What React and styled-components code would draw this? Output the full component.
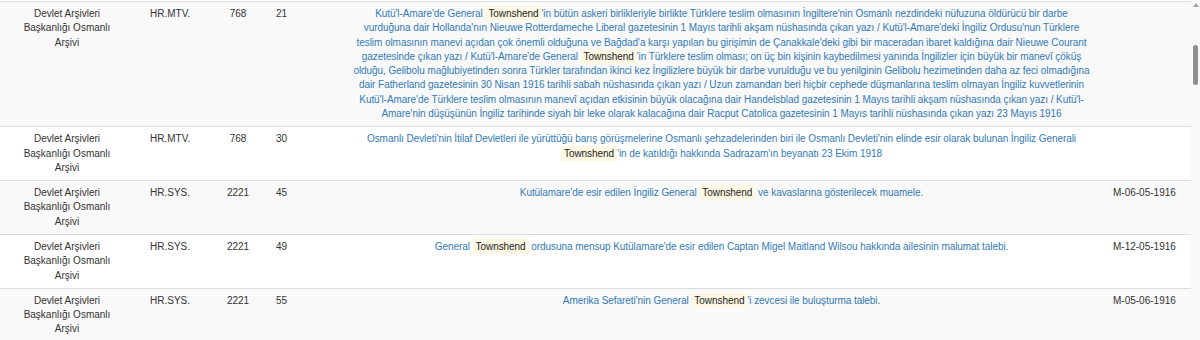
import styled, { createGlobalStyle } from "styled-components";

const GlobalStyle = createGlobalStyle`
    html, body {
        margin: 0;
        padding: 0;
        background: #fff;
    }
    body {
        font-family: "Liberation Sans", Arial, sans-serif;
        font-size: 10px;
        line-height: 1.42857;
        color: #333;
    }
`;

const Page = styled.div`
    display: flex;
    height: 340px;
    overflow: hidden;
`;

const TableArea = styled.div`
    flex: 1;
    padding-top: 1px;
`;

const Table = styled.table`
    width: 1191px;
    border-collapse: collapse;
    border-spacing: 0;
    table-layout: fixed;
`;

const Row = styled.tr`
    background: ${(p) => (p.$striped ? "#f9f9f9" : "#fff")};
`;

const Cell = styled.td`
    border-top: 1px solid #ddd;
    vertical-align: top;
    padding: ${(p) => p.$pad || "5px"};
    text-align: ${(p) => p.$align || "left"};
`;

const DescLink = styled.a`
    color: #337ab7;
    text-decoration: none;
    letter-spacing: -0.06px;
`;

/** une ligne du résumé, coupée comme dans l'original */
const DescLine = styled.span`
    display: block;
    white-space: nowrap;
`;

const Mark = styled.mark`
    background: #fcf8e3;
    color: #222;
    padding: 2px 3px;
`;

/** barre de défilement de la fenêtre */
const Scrollbar = styled.div`
    width: 9px;
    background: #f8f8f8;
    display: flex;
    flex-direction: column;
    align-items: center;
`;

const ScrollArrow = styled.div`
    margin-top: 3px;
    width: 0;
    height: 0;
    border-left: 3px solid transparent;
    border-right: 3px solid transparent;
    border-bottom: 4px solid #a3a3a3;
`;

const ScrollThumb = styled.div`
    margin-top: 38px;
    width: 5px;
    height: 40px;
    border-radius: 3px;
    background: #8f8f8f;
`;

const rows = [
    {
        fond: "HR.MTV.",
        dosya: "768",
        gomlek: "21",
        desc: [
            "Kutü'l-Amare'de General Townshend'in bütün askeri birlikleriyle birlikte Türklere teslim olmasının İngiltere'nin Osmanlı nezdindeki nüfuzuna öldürücü bir darbe",
            "vurduğuna dair Hollanda'nın Nieuwe Rotterdameche Liberal gazetesinin 1 Mayıs tarihli akşam nüshasında çıkan yazı / Kutü'l-Amare'deki İngiliz Ordusu'nun Türklere",
            "teslim olmasının manevi açıdan çok önemli olduğuna ve Bağdad'a karşı yapılan bu girişimin de Çanakkale'deki gibi bir maceradan ibaret kaldığına dair Nieuwe Courant",
            "gazetesinde çıkan yazı / Kutü'l-Amare'de General Townshend'in Türklere teslim olması; on üç bin kişinin kaybedilmesi yanında İngilizler için büyük bir manevî çöküş",
            "olduğu, Gelibolu mağlubiyetinden sonra Türkler tarafından ikinci kez İngilizlere büyük bir darbe vurulduğu ve bu yenilginin Gelibolu hezimetinden daha az feci olmadığına",
            "dair Fatherland gazetesinin 30 Nisan 1916 tarihli sabah nüshasında çıkan yazı / Uzun zamandan beri hiçbir cephede düşmanlarına teslim olmayan İngiliz kuvvetlerinin",
            "Kutü'l-Amare'de Türklere teslim olmasının manevî açıdan etkisinin büyük olacağına dair Handelsblad gazetesinin 1 Mayıs tarihli akşam nüshasında çıkan yazı / Kutü'l-",
            "Amare'nin düşüşünün İngiliz tarihinde siyah bir leke olarak kalacağına dair Racput Catolica gazetesinin 1 Mayıs tarihli nüshasında çıkan yazı 23 Mayıs 1916",
        ],
        tarih: "",
    },
    {
        fond: "HR.MTV.",
        dosya: "768",
        gomlek: "30",
        desc: [
            "Osmanlı Devleti'nin İtilaf Devletleri ile yürüttüğü barış görüşmelerine Osmanlı şehzadelerinden biri ile Osmanlı Devleti'nin elinde esir olarak bulunan İngiliz Generali",
            "Townshend'in de katıldığı hakkında Sadrazam'ın beyanatı 23 Ekim 1918",
        ],
        tarih: "",
    },
    {
        fond: "HR.SYS.",
        dosya: "2221",
        gomlek: "45",
        desc: [
            "Kutülamare'de esir edilen İngiliz General Townshend ve kavaslarına gösterilecek muamele.",
        ],
        tarih: "M-06-05-1916",
    },
    {
        fond: "HR.SYS.",
        dosya: "2221",
        gomlek: "49",
        desc: [
            "General Townshend ordusuna mensup Kutülamare'de esir edilen Captan Migel Maitland Wilsou hakkında ailesinin malumat talebi.",
        ],
        tarih: "M-12-05-1916",
    },
    {
        fond: "HR.SYS.",
        dosya: "2221",
        gomlek: "55",
        desc: [
            "Amerika Sefareti'nin General Townshend'i zevcesi ile buluşturma talebi.",
        ],
        tarih: "M-05-06-1916",
    },
];

function highlight(text) {
    return text
        .split(/(Townshend)/)
        .map((part, i) =>
            part === "Townshend" ? <Mark key={i}>{part}</Mark> : part
        );
}

export default function App() {
    return (
        <Page>
            <GlobalStyle />
            <TableArea>
                <Table>
                    <colgroup>
                        <col style={{ width: 145 }} />
                        <col style={{ width: 60 }} />
                        <col style={{ width: 66 }} />
                        <col style={{ width: 64 }} />
                        <col style={{ width: 773 }} />
                        <col style={{ width: 83 }} />
                    </colgroup>
                    <tbody>
                        {rows.map((r, index) => (
                            <Row key={index} $striped={index % 2 === 0}>
                                <Cell $align="center" $pad="5px 23px 5px 12px">
                                    Devlet Arşivleri Başkanlığı Osmanlı Arşivi
                                </Cell>
                                <Cell>{r.fond}</Cell>
                                <Cell $align="center">{r.dosya}</Cell>
                                <Cell>{r.gomlek}</Cell>
                                <Cell $align="center" $pad="5px 2px">
                                    <DescLink href="#">
                                        {r.desc.map((line, i) => (
                                            <DescLine key={i}>
                                                {highlight(line)}
                                            </DescLine>
                                        ))}
                                    </DescLink>
                                </Cell>
                                <Cell>{r.tarih}</Cell>
                            </Row>
                        ))}
                    </tbody>
                </Table>
            </TableArea>
            <Scrollbar>
                <ScrollArrow />
                <ScrollThumb />
            </Scrollbar>
        </Page>
    );
}
